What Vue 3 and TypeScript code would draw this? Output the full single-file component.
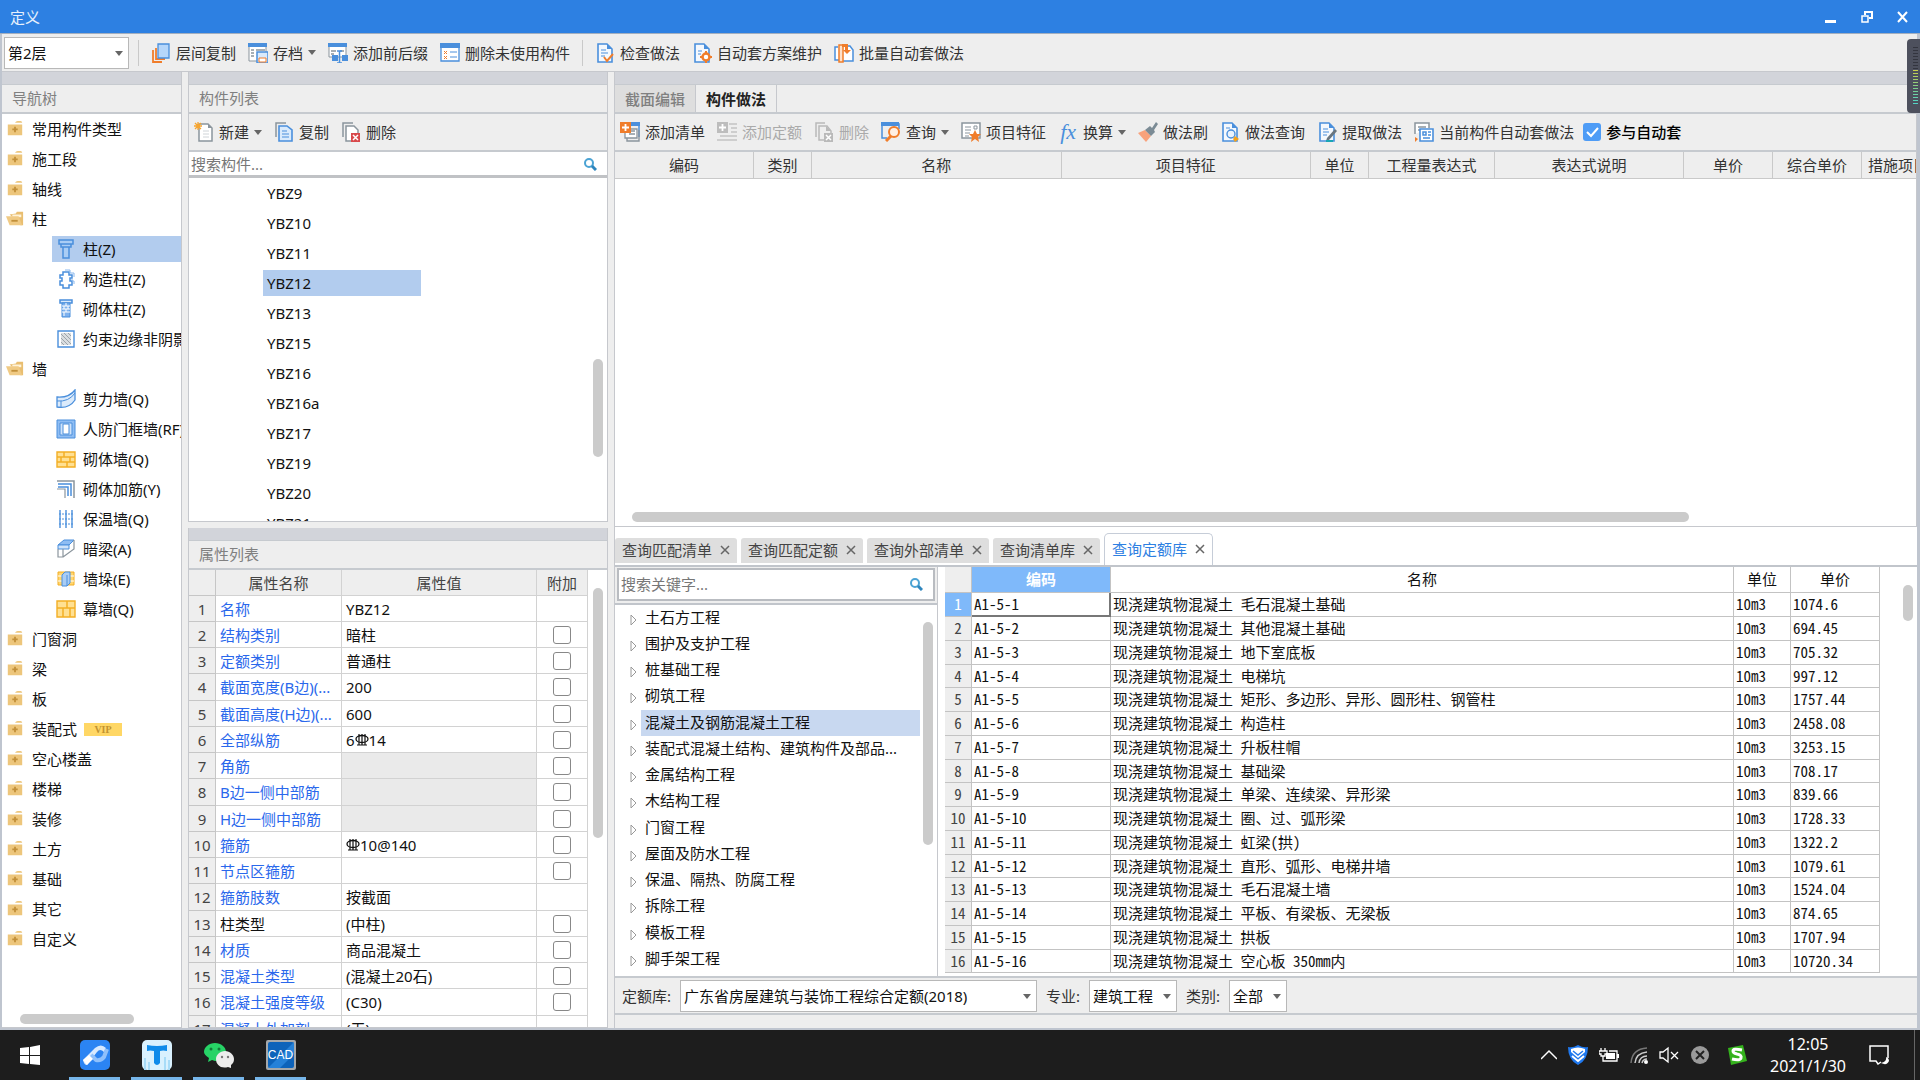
<script setup lang="ts">
import { ref } from 'vue'

interface TreeLeaf { label: string; icon: string }
interface TreeGroup { label: string; vip?: boolean; children?: TreeLeaf[] }
interface ToolItem { label: string; icon: string; menu?: boolean; disabled?: boolean; divider?: boolean }
interface PropRow { name: string; value?: string; rebar?: [string, string]; check?: boolean; plain?: boolean; locked?: boolean }

const B = '#4a8fdc'
const O = '#f07d2b'
const G = '#8b959d'
const folderBody = '<path d="M2 5h16v12H2zM10 3q1-2 3-2h3q2 0 2 2z" fill="#edc67c"/>'
const page = (c: string) => `<path d="M3 1h9l5 5v13H3z" fill="#f4f8fd" stroke="${c}" stroke-width="1.6"/><path d="M12 1v5h5z" fill="${c}"/>`

const icons: Record<string, string> = {
  closed: folderBody + '<path d="M10 7.500v6M7 10.500h6" stroke="#c2903a" stroke-width="2"/>',
  open: '<path d="M4 5l7-1 1-2h7v15h-3z" fill="#e9be70"/><path d="M7 5h10v3H7z" fill="#fff3d8"/><path d="M0 7h14l4 10H4z" fill="#f0ca84"/><path d="M6 12h7" stroke="#c2903a" stroke-width="2"/>',
  column: `<path d="M3 1h14v4H3zM5 5h10v3H5zM7 8h6v11H7z" fill="#a9cdf5" stroke="${B}" stroke-width="1.500"/>`,
  structCol: `<path d="M7 3h6v3h3v3h-2v3h2v4h-3v3H7v-3H4v-4h2V9H4V6h3z" fill="#fff" stroke="${B}" stroke-width="1.500"/><path d="M9 1h5v3h4v4M16 10v2h2v3" fill="none" stroke="#8ab8ee"/>`,
  brickCol: `<path d="M4 1h12v3H4z" fill="#d9eafc" stroke="${B}" stroke-width="1.500"/><path d="M6 4h8v14H6z" fill="#7fb2ee" stroke="${B}"/><path d="M6 7h8M6 10h8M6 13h8M10 4v3M8 7v3M12 7v3M10 10v3M8 13v4" stroke="#fff"/>`,
  edge: `<path d="M2 2h16v16H2z" fill="#fff" stroke="${B}" stroke-width="1.400"/><path d="M5 4h10v12H5z" fill="#d9dde0"/><path d="M5 5l10 10M5 9l7 7M8 4l7 7M5 13l3 3M12 4l3 3" stroke="#9ca4aa"/>`,
  shear: `<path d="M1 8q12 1 18-7v10q-6 9-18 7z" fill="#dcebfb" stroke="${B}" stroke-width="1.300"/><path d="M1 12q12 1 18-8M5 12v6" stroke="${B}" fill="none"/>`,
  frame: `<path d="M1 1h18v18H1z" fill="#8fbdf3" stroke="${B}"/><path d="M4 4h12v12H4z" fill="#cfe3fa" stroke="${B}"/><path d="M7 5h6v10H7z" fill="#fff" stroke="${B}"/>`,
  brick: '<path d="M1 3h18v15H1z" fill="#ffe092" stroke="#f3ae25" stroke-width="1.400"/><path d="M1 8h18M1 13h18M8 3v5M14 8v5M5 8v5M11 13v5" stroke="#f3ae25" stroke-width="1.500"/>',
  rebar: `<path d="M1 2h17v17" fill="none" stroke="${G}" stroke-width="1.500"/><path d="M2 5h13v12M2 8h10v9" fill="none" stroke="${B}" stroke-width="1.500"/><path d="M1 10h8v9" fill="none" stroke="${G}" stroke-width="1.200"/>`,
  insul: `<path d="M4 1v18M10 1v18M16 1v18" stroke="${B}" stroke-width="1.400"/><path d="M3 5h14M3 10h14M3 15h14" stroke="${B}" stroke-dasharray="2 1"/>`,
  beam: `<path d="M2 6l6-5h10l-5 5z" fill="#8fbdf3" stroke="${B}"/><path d="M2 6h11v4H2z" fill="#cfe3fa" stroke="${B}"/><path d="M2 10v8h5v-8M7 18l11-8V1" fill="none" stroke="${G}" stroke-width="1.200"/>`,
  pier: `<path d="M2 3h16v13H2z" fill="#ffd56f" stroke="#f3ae25"/><path d="M2 7h16M2 12h16" stroke="#fff"/><path d="M6 6l3-3h5v11l-3 3H6z" fill="#a9cdf5" stroke="${B}"/><path d="M11 6v11" stroke="${B}"/>`,
  curtain: '<path d="M1 2h18v16H1z" fill="#ffe092" stroke="#f3ae25" stroke-width="1.400"/><path d="M1 9h18M11 2v7M7 9v9M14 9v9" stroke="#f3ae25" stroke-width="1.500"/>',
  layers: `<path d="M2 7v12h9M5 5v11h9" fill="none" stroke="${O}" stroke-width="1.800"/><path d="M7 1h11v14H7z" fill="#b5d6fa" stroke="${B}" stroke-width="1.300"/>`,
  archive: `<path d="M1 1h17v17H1z" fill="#fff" stroke="${G}"/><path d="M0 0h19v4H0z" fill="${B}"/><path d="M3 7h3M3 10h3M3 13h3M8 7h9" stroke="${G}" stroke-width="1.500"/><path d="M9 9h11v11H9z" fill="#d9eafc" stroke="${B}" stroke-width="1.500"/><path d="M11 15h7v4h-7z" fill="#fff" stroke="${O}"/>`,
  affix: `<path d="M1 1h17v13H1z" fill="#fff" stroke="${G}"/><path d="M0 0h19v4H0z" fill="${B}"/><path d="M3 8h5M3 11h3M12 8h4" stroke="${G}" stroke-width="1.500"/><path d="M9 8h5M11.500 8v12M9 20h5" stroke="${B}" stroke-width="1.500"/><path d="M4 12h6v6H4zM14 12h6v6h-6z" fill="${B}"/>`,
  unused: `<path d="M1 1h18v17H1z" fill="#fff" stroke="${B}" stroke-width="1.300"/><path d="M0 0h20v5H0z" fill="${B}"/><path d="M4 8l3 3M7 8l-3 3M4 13l3 3M7 13l-3 3" stroke="${O}"/><path d="M10 9h7M10 14h7" stroke="${B}"/>`,
  check: page(B) + `<path d="M6 7h5M6 10h7M6 13h4" stroke="${B}"/><path d="M9 14l3 4 6-7" fill="none" stroke="${O}" stroke-width="2"/>`,
  gear: page(B) + `<path d="M6 8h4M6 11h3" stroke="${B}"/><circle cx="14" cy="14" r="3.500" fill="#fff" stroke="${O}" stroke-width="2.500"/><path d="M14 8v3M14 17v3M8 14h3M17 14h3" stroke="${O}" stroke-width="2"/>`,
  batch: `<path d="M4 4H1v13h4M10 3h6l3 4v11H8" fill="#fff" stroke="${B}" stroke-width="1.500"/><path d="M5 2h4v17H5z" fill="#ffe0c8" stroke="${O}" stroke-width="1.500"/><path d="M8 1h6v6h3l-4 4-4-4h2V4H8z" fill="${O}"/>`,
  fresh: `<path d="M5 2h9l4 4v13H5z" fill="#fff" stroke="${G}" stroke-width="1.500"/><path d="M14 2v4h4z" fill="${G}"/><path d="M9 9h6M9 12h6M9 15h6" stroke="#cfd4d8"/><path d="M4 0v8M0 4h8M1 1l6 6M7 1L1 7" stroke="#f6a530" stroke-width="1.300"/>`,
  copy: `<path d="M2 15V1h10" fill="none" stroke="${G}" stroke-width="1.500"/><path d="M5 4h8l5 4v11H5z" fill="#d9eafc" stroke="${B}" stroke-width="1.600"/><path d="M8 9h5M8 12h7M8 15h7" stroke="${B}"/>`,
  del: `<path d="M2 15V1h10" fill="none" stroke="${G}" stroke-width="1.500"/><path d="M5 4h8l4 4v11H5z" fill="#fff" stroke="${G}" stroke-width="1.500"/><path d="M10 11h9v9h-9z" fill="#d8494b"/><path d="M12 13l5 5M17 13l-5 5" stroke="#fff" stroke-width="1.500"/>`,
  delOff: '<path d="M2 15V1h9M5 18V4h8l4 5v9z" fill="none" stroke="#b9b9b9" stroke-width="1.500"/><path d="M12 4v5h5z" fill="#b9b9b9"/><path d="M10 11h9v9h-9z" fill="#b9b9b9"/><path d="M12 13l5 5M17 13l-5 5" stroke="#fff" stroke-width="1.500"/>',
  addList: `<path d="M10 1h9v14" fill="none" stroke="${B}" stroke-width="1.500"/><path d="M11 0h9v4h-9z" fill="${B}"/><path d="M5 7h12v9H5z" fill="#fff" stroke="${G}" stroke-width="1.300"/><path d="M7 16v3h12V8M9 9h6M9 12h6" fill="none" stroke="${G}" stroke-width="1.400"/><path d="M0 0h11v11H0z" fill="${O}"/><path d="M5.500 2v7M2 5.500h7" stroke="#fff" stroke-width="1.800"/>`,
  addOff: '<path d="M0 0h11v11H0z" fill="#bdbdbd"/><path d="M5.500 2v7M2 5.500h7" stroke="#fff" stroke-width="1.800"/><path d="M12 2h8M14 6h6M14 10h6M3 14h17M0 18h20M8 14h4" stroke="#c4c4c4" stroke-width="1.600"/>',
  query: `<path d="M1 2h17v5M1 2v14h5" fill="none" stroke="${B}" stroke-width="1.500"/><path d="M0 0h18v4H0z" fill="${B}"/><circle cx="13" cy="10" r="5" fill="#fff0e4" stroke="${O}" stroke-width="2"/><path d="M10 14l-5 5" stroke="${O}" stroke-width="3"/>`,
  feature: `<path d="M1 1h18v15H1z" fill="#fff" stroke="${G}" stroke-width="1.500"/><path d="M4 5h6M4 8h6M4 11h5M4 14h4M13 4h3v3h-3z" stroke="${G}" fill="none"/><path d="M14 8l2 4h4l-3 3 1 5-4-3-4 3 1-5-3-3h4z" fill="${O}"/>`,
  brush: `<path d="M0 11l7-3 6 6-5 6z" fill="#f8a27c"/><path d="M7 8l5-4 2 2 4-6 2 2-4 6 1 2-4 4z" fill="#7b8b95"/>`,
  pageFind: page(B) + `<path d="M6 6h4" stroke="${B}"/><circle cx="11" cy="12" r="4" fill="#eaf3fd" stroke="${B}" stroke-width="1.400"/><path d="M15 14l4 3-4 3-2-3z" fill="#f5a21b"/>`,
  extract: page(B) + `<path d="M6 7h5M6 10h6M6 13h4" stroke="${B}"/><path d="M18 7l2 2-8 9-3 1 1-3z" fill="#69757e"/><path d="M9 19h7" stroke="#19a5b5" stroke-width="2"/>`,
  autoSet: `<path d="M1 12V1h14v5" fill="#fff" stroke="${G}" stroke-width="1.500"/><path d="M4 5h8M4 8h3" stroke="${G}" stroke-width="1.500"/><path d="M6 7h13v12H6z" fill="#fff" stroke="${B}" stroke-width="1.600"/><path d="M9 10h3v3H9zM9 16h7M14 10h3M14 13h3" stroke="${B}" stroke-width="1.500" fill="none"/><path d="M1 15l3 2-3 3z" fill="${O}"/>`,
}

const tree: TreeGroup[] = [
  { label: '常用构件类型' }, { label: '施工段' }, { label: '轴线' },
  { label: '柱', children: [
    { label: '柱(Z)', icon: 'column' }, { label: '构造柱(Z)', icon: 'structCol' },
    { label: '砌体柱(Z)', icon: 'brickCol' }, { label: '约束边缘非阴影', icon: 'edge' },
  ] },
  { label: '墙', children: [
    { label: '剪力墙(Q)', icon: 'shear' }, { label: '人防门框墙(RF)', icon: 'frame' },
    { label: '砌体墙(Q)', icon: 'brick' }, { label: '砌体加筋(Y)', icon: 'rebar' },
    { label: '保温墙(Q)', icon: 'insul' }, { label: '暗梁(A)', icon: 'beam' },
    { label: '墙垛(E)', icon: 'pier' }, { label: '幕墙(Q)', icon: 'curtain' },
  ] },
  { label: '门窗洞' }, { label: '梁' }, { label: '板' }, { label: '装配式', vip: true },
  { label: '空心楼盖' }, { label: '楼梯' }, { label: '装修' }, { label: '土方' },
  { label: '基础' }, { label: '其它' }, { label: '自定义' },
]

const mainTools: ToolItem[] = [
  { label: '层间复制', icon: 'layers' }, { label: '存档', icon: 'archive', menu: true },
  { label: '添加前后缀', icon: 'affix' }, { label: '删除未使用构件', icon: 'unused' },
  { label: '检查做法', icon: 'check', divider: true }, { label: '自动套方案维护', icon: 'gear' },
  { label: '批量自动套做法', icon: 'batch' },
]
const listTools: ToolItem[] = [
  { label: '新建', icon: 'fresh', menu: true }, { label: '复制', icon: 'copy' }, { label: '删除', icon: 'del' },
]
const methodTools: ToolItem[] = [
  { label: '添加清单', icon: 'addList' }, { label: '添加定额', icon: 'addOff', disabled: true },
  { label: '删除', icon: 'delOff', disabled: true }, { label: '查询', icon: 'query', menu: true },
  { label: '项目特征', icon: 'feature' }, { label: '换算', icon: 'fx', menu: true },
  { label: '做法刷', icon: 'brush' }, { label: '做法查询', icon: 'pageFind' },
  { label: '提取做法', icon: 'extract' }, { label: '当前构件自动套做法', icon: 'autoSet' },
]

const components = ['YBZ9', 'YBZ10', 'YBZ11', 'YBZ12', 'YBZ13', 'YBZ15', 'YBZ16', 'YBZ16a', 'YBZ17', 'YBZ19', 'YBZ20', 'YBZ21']

const props: PropRow[] = [
  { name: '名称', value: 'YBZ12' },
  { name: '结构类别', value: '暗柱', check: true },
  { name: '定额类别', value: '普通柱', check: true },
  { name: '截面宽度(B边)(...', value: '200', check: true },
  { name: '截面高度(H边)(...', value: '600', check: true },
  { name: '全部纵筋', rebar: ['6', '14'], check: true },
  { name: '角筋', check: true, locked: true },
  { name: 'B边一侧中部筋', check: true, locked: true },
  { name: 'H边一侧中部筋', check: true, locked: true },
  { name: '箍筋', rebar: ['', '10@140'], check: true },
  { name: '节点区箍筋', check: true },
  { name: '箍筋肢数', value: '按截面' },
  { name: '柱类型', value: '(中柱)', check: true, plain: true },
  { name: '材质', value: '商品混凝土', check: true },
  { name: '混凝土类型', value: '(混凝土20石)', check: true },
  { name: '混凝土强度等级', value: '(C30)', check: true },
  { name: '混凝土外加剂', value: '(无)' },
]

const methodColumns = [
  ['编码', 'w-code'], ['类别', 'w-kind'], ['名称', ''], ['项目特征', ''], ['单位', 'w-kind'], ['工程量表达式', 'w-expr'],
  ['表达式说明', 'w-note'], ['单价', 'w-price'], ['综合单价', 'w-price'], ['措施项目', 'w-last'],
]
const queryTabs = ['查询匹配清单', '查询匹配定额', '查询外部清单', '查询清单库', '查询定额库']
const chapters = ['土石方工程', '围护及支护工程', '桩基础工程', '砌筑工程', '混凝土及钢筋混凝土工程', '装配式混凝土结构、建筑构件及部品...', '金属结构工程', '木结构工程', '门窗工程', '屋面及防水工程', '保温、隔热、防腐工程', '拆除工程', '模板工程', '脚手架工程']
const quotas: [string, string][] = [
  ['毛石混凝土基础', '1074.6'], ['其他混凝土基础', '694.45'], ['地下室底板', '705.32'], ['电梯坑', '997.12'],
  ['矩形、多边形、异形、圆形柱、钢管柱', '1757.44'], ['构造柱', '2458.08'], ['升板柱帽', '3253.15'], ['基础梁', '708.17'],
  ['单梁、连续梁、异形梁', '839.66'], ['圈、过、弧形梁', '1728.33'], ['虹梁(拱)', '1322.2'], ['直形、弧形、电梯井墙', '1079.61'],
  ['毛石混凝土墙', '1524.04'], ['平板、有梁板、无梁板', '874.65'], ['拱板', '1707.94'], ['空心板 350mm内', '10720.34'],
]

const activeLeaf = ref('柱(Z)')
const activeComponent = ref('YBZ12')
const activeTab = ref('查询定额库')
const activeChapter = ref('混凝土及钢筋混凝土工程')
const autoJoin = ref(true)
</script>

<template>
  <div class="window">
    <header class="titlebar">
      <span>定义</span>
      <div class="win-btns">
        <button aria-label="最小化"><svg width="12" height="12"><path d="M0 9h11v3H0z" fill="#fff" /></svg></button>
        <button aria-label="还原"><svg width="12" height="12"><path d="M4 4V1h7v6H8M4 1h7" fill="none" stroke="#fff" stroke-width="2" /><path d="M1 5h6v6H1z" fill="none" stroke="#fff" stroke-width="1.500" /></svg></button>
        <button aria-label="关闭"><svg width="12" height="12"><path d="M1 1l9 10M10 1L1 11" stroke="#fff" stroke-width="2" /></svg></button>
      </div>
    </header>

    <div class="frame">
      <div class="toolbar main-bar">
        <span class="select floor"><select aria-label="楼层"><option>第2层</option></select></span>
        <i class="divider first"></i>
        <template v-for="t in mainTools" :key="t.label">
          <i v-if="t.divider" class="divider"></i>
          <button class="tool">
            <svg class="icon" viewBox="0 0 20 20" v-html="icons[t.icon]"></svg>{{ t.label }}<i v-if="t.menu" class="caret"></i>
          </button>
        </template>
      </div>

      <main class="workspace">
        <nav class="panel nav">
          <div class="band"></div>
          <h2 class="head">导航树</h2>
          <div class="tree">
            <template v-for="g in tree" :key="g.label">
              <button class="group">
                <svg class="folder" viewBox="0 0 20 20" v-html="g.children ? icons.open : icons.closed"></svg>{{ g.label }}
                <span v-if="g.vip" class="vip">VIP</span>
              </button>
              <button v-for="c in g.children" :key="c.label" class="leaf" @click="activeLeaf = c.label">
                <span class="leaf-body" :class="{ on: activeLeaf === c.label }">
                  <svg class="icon" viewBox="0 0 20 20" v-html="icons[c.icon]"></svg>{{ c.label }}
                </span>
              </button>
            </template>
            <i class="thumb nav-thumb"></i>
          </div>
        </nav>

        <div class="middle">
          <section class="panel">
            <div class="band"></div>
            <h2 class="head">构件列表</h2>
            <div class="toolbar sub-bar">
              <button v-for="t in listTools" :key="t.label" class="tool">
                <svg class="icon" viewBox="0 0 20 20" v-html="icons[t.icon]"></svg>{{ t.label }}<i v-if="t.menu" class="caret"></i>
              </button>
            </div>
            <label class="search">
              <input type="text" placeholder="搜索构件..." aria-label="搜索构件">
              <svg width="14" height="14"><circle cx="6" cy="6" r="4" fill="none" stroke="#4ba3d4" stroke-width="2" /><path d="M9 9l4 4" stroke="#2f86bd" stroke-width="3" /></svg>
            </label>
            <div class="comp-list">
              <button v-for="c in components" :key="c" class="comp" @click="activeComponent = c">
                <span :class="{ on: activeComponent === c }">{{ c }}</span>
              </button>
              <i class="thumb comp-thumb"></i>
            </div>
          </section>

          <section class="panel">
            <div class="band"></div>
            <h2 class="head">属性列表</h2>
            <div class="props">
              <table>
                <thead><tr><th class="no"></th><th class="pname">属性名称</th><th>属性值</th><th class="extra">附加</th></tr></thead>
                <tbody>
                  <tr v-for="(p, i) in props" :key="p.name">
                    <td class="no">{{ i + 1 }}</td>
                    <td class="key" :class="{ plain: p.plain }">{{ p.name }}</td>
                    <td :class="{ locked: p.locked }">
                      <template v-if="p.rebar">{{ p.rebar[0] }}<svg class="bar-sign" viewBox="0 0 14 14"><path d="M7 1v11M4 1v11M10 1v11M2 12h10" stroke="#111" stroke-width="1.200" /><ellipse cx="7" cy="6" rx="6" ry="3.500" fill="none" stroke="#111" stroke-width="1.300" /></svg>{{ p.rebar[1] }}</template>
                      <template v-else>{{ p.value }}</template>
                    </td>
                    <td class="extra"><input v-if="p.check" type="checkbox" :aria-label="p.name + ' 附加'"></td>
                  </tr>
                </tbody>
              </table>
              <i class="thumb prop-thumb"></i>
            </div>
          </section>
        </div>

        <div class="right">
          <section class="panel method">
            <div class="band"></div>
            <div class="head tabs"><button class="tab">截面编辑</button><button class="tab on">构件做法</button></div>
            <div class="toolbar sub-bar">
              <button v-for="t in methodTools" :key="t.label" class="tool" :disabled="t.disabled">
                <span v-if="t.icon === 'fx'" class="fx">fx</span>
                <svg v-else class="icon" viewBox="0 0 20 20" v-html="icons[t.icon]"></svg>{{ t.label }}<i v-if="t.menu" class="caret"></i>
              </button>
              <label class="join"><input v-model="autoJoin" type="checkbox">参与自动套</label>
            </div>
            <div class="method-body">
              <table>
                <thead><tr><th v-for="c in methodColumns" :key="c[0]" :class="c[1]">{{ c[0] }}</th></tr></thead>
              </table>
              <i class="thumb method-thumb"></i>
            </div>
          </section>

          <section class="query">
            <div class="qtabs">
              <div v-for="t in queryTabs" :key="t" class="qtab" :class="{ on: activeTab === t }">
                <button @click="activeTab = t">{{ t }}</button>
                <button :aria-label="'关闭' + t"><svg width="10" height="10"><path d="M1 1l8 8M9 1L1 9" stroke="#666" stroke-width="1.500" /></svg></button>
              </div>
            </div>
            <div class="qbody">
              <div class="chapters">
                <div class="qsearch">
                  <label class="search boxed">
                    <input type="text" placeholder="搜索关键字..." aria-label="搜索关键字">
                    <svg width="14" height="14"><circle cx="6" cy="6" r="4" fill="none" stroke="#4ba3d4" stroke-width="2" /><path d="M9 9l4 4" stroke="#2f86bd" stroke-width="3" /></svg>
                  </label>
                </div>
                <div class="chapter-list">
                  <button v-for="c in chapters" :key="c" class="chapter" @click="activeChapter = c">
                    <svg width="8" height="12"><path d="M1 1v10l5-5z" fill="#fff" stroke="#999" /></svg>
                    <span :class="{ on: activeChapter === c }">{{ c }}</span>
                  </button>
                  <i class="thumb chapter-thumb"></i>
                </div>
              </div>
              <div class="quota">
                <table>
                  <thead><tr><th class="no"></th><th class="q-code">编码</th><th>名称</th><th class="q-unit">单位</th><th class="q-price">单价</th></tr></thead>
                  <tbody>
                    <tr v-for="(q, i) in quotas" :key="i">
                      <td class="no">{{ i + 1 }}</td>
                      <td>A1-5-{{ i + 1 }}</td><td>现浇建筑物混凝土 {{ q[0] }}</td><td>10m3</td><td>{{ q[1] }}</td>
                    </tr>
                  </tbody>
                </table>
                <i class="thumb quota-thumb"></i>
              </div>
            </div>
            <div class="filters">
              <label for="lib">定额库:</label>
              <span class="select lib"><select id="lib"><option>广东省房屋建筑与装饰工程综合定额(2018)</option></select></span>
              <label for="major">专业:</label>
              <span class="select major"><select id="major"><option>建筑工程</option></select></span>
              <label for="kind">类别:</label>
              <span class="select kind"><select id="kind"><option>全部</option></select></span>
            </div>
          </section>
        </div>
      </main>
    </div>

    <div class="meter"><i class="idle"></i><i class="level"></i></div>

    <footer class="taskbar">
      <button class="start" aria-label="开始"><svg width="20" height="20"><path d="M0 3l9-1v8H0zM10 2l10-2v10H10zM0 11h9v8l-9-1zM10 11h10v9l-10-1z" fill="#fff" /></svg></button>
      <button class="app" aria-label="造价工具">
        <svg viewBox="0 0 30 30"><rect width="30" height="30" rx="5" fill="#2b84f3" /><path d="M3 20L15 8q6-5 11 0l-2 4q-4-4-7 0L7 25q-3 0-4-5z" fill="#d7e9ff" /><path d="M11 15l5 5q5 1 8-3l3-8" fill="none" stroke="#8fc0fb" stroke-width="4" /><path d="M3 20l6-5 4 4-6 6z" fill="#fff" /></svg>
      </button>
      <button class="app" aria-label="土建计量">
        <svg viewBox="0 0 30 30"><rect width="30" height="30" rx="5" fill="#d9f1fe" /><path d="M3 30V18M7 30V22M23 30V17M27 30V20" stroke="#a8dcf8" stroke-width="2" /><path d="M5 5q10 2 20 0v6q-4-1-7 0v12q-3 4-6 0V11q-4-1-7 0z" fill="#0f8bea" /></svg>
      </button>
      <button class="app" aria-label="微信">
        <svg viewBox="0 0 30 30"><path d="M11 3c6 0 11 4 11 9s-5 9-11 9l-3-1-4 2 1-4c-3-2-5-4-5-6 0-5 5-9 11-9z" fill="#27d366" /><circle cx="7" cy="9" r="1.500" fill="#137a3a" /><circle cx="15" cy="9" r="1.500" fill="#137a3a" /><path d="M21 11c5 0 9 4 9 8 0 3-1 4-3 6v3l-3-1c-7 2-12-2-12-8 0-4 4-8 9-8z" fill="#ececec" /><circle cx="18" cy="17" r="1.200" fill="#777" /><circle cx="24" cy="17" r="1.200" fill="#777" /></svg>
      </button>
      <button class="app" aria-label="看图">
        <svg viewBox="0 0 30 30"><rect width="30" height="30" rx="2" fill="#a5a8aa" /><rect x="2" y="2" width="26" height="26" rx="2" fill="#0d63ba" /><path d="M2 28L28 2v12L14 28z" fill="#2581d8" /><text x="15" y="21" font-size="13" textLength="0" fill="none" /></svg>
        <span class="cad">CAD</span>
      </button>

      <div class="tray">
        <svg width="16" height="20"><path d="M0 14l8-8 8 8" fill="none" stroke="#fff" stroke-width="1.500" /></svg>
        <svg width="20" height="20"><path d="M10 0q5 3 10 2 0 13-10 18Q0 15 0 2q5 1 10-2z" fill="#1f78ee" /><path d="M3 4q7-3 14 0v3l-7 6-7-6z" fill="#fff" /><path d="M5 6l5 4 5-4M4 11l6 5 6-5" fill="none" stroke="#1f78ee" stroke-width="1.500" /><path d="M4 11l6 5 6-5" fill="none" stroke="#fff" stroke-width="2" /></svg>
        <svg width="20" height="20"><path d="M2 3v3M6 3v3M0 6h8v3H6v2H2V9H0zM4 11v5h14V6h-8" fill="none" stroke="#fff" stroke-width="1.300" /><path d="M7 8h9v6H7z" fill="#fff" /><path d="M19 9v4" stroke="#fff" stroke-width="2" /></svg>
        <svg width="18" height="20"><path d="M1 18Q2 4 17 3" fill="none" stroke="#777" stroke-width="1.500" /><path d="M5 18Q6 8 17 7M9 18q1-7 8-7M12 18q1-4 5-4" fill="none" stroke="#ccc" stroke-width="1.500" /><circle cx="16" cy="17" r="2" fill="#fff" /></svg>
        <svg width="20" height="20"><path d="M1 7h3l5-4v14l-5-4H1zM12 7l7 7M19 7l-7 7" fill="none" stroke="#fff" stroke-width="1.300" /></svg>
        <svg width="20" height="20"><circle cx="10" cy="10" r="9" fill="#9a9a9a" /><path d="M6 6l8 8M14 6l-8 8" stroke="#222" stroke-width="2" /></svg>
        <svg class="sogou" width="20" height="20"><path d="M1 3L16 0l4 16-16 4z" fill="#35b31d" /><path d="M15 5q-9-2-9 1 0 2 4 3 5 1 4 4-1 3-9 1" fill="none" stroke="#fff" stroke-width="3" /></svg>
        <div class="clock"><span>12:05</span><span>2021/1/30</span></div>
        <svg width="20" height="20"><path d="M12 17l-3 2-2-3H1V1h18v12" fill="none" stroke="#fff" stroke-width="1.500" /><path d="M17 12q1 5-5 6 6 3 8-2 0-3-3-4z" fill="#fff" /></svg>
      </div>
    </footer>
  </div>
</template>

<style>
body { margin: 0; overflow: hidden; }
</style>

<style scoped>
.window {
  position: relative; display: flex; flex-direction: column; height: 100vh;
  background: #eee; color: #111; font: 15px/20px "Noto Sans", "Noto Sans CJK SC", sans-serif;
}
* { box-sizing: border-box; }
button { font: inherit; color: inherit; background: none; border: 0; padding: 0; text-align: left; white-space: nowrap; }
input, select { font: inherit; color: inherit; margin: 0; }
table { border-collapse: separate; border-spacing: 0; table-layout: fixed; width: 100%; }
th { font-weight: 400; padding: 0; white-space: nowrap; overflow: hidden; }
td { padding: 0 4px; white-space: nowrap; overflow: hidden; }
svg { flex: none; }

.titlebar {
  display: flex; justify-content: space-between; align-items: center; height: 34px; flex: none;
  padding: 0 11px 0 10px; background: #2d80e2; border-bottom: 1px solid #a3afbf; color: #e6f0fc;
}
.win-btns { display: flex; gap: 24px; }
.win-btns button { display: flex; }

.frame {
  flex: 1; min-height: 0; display: flex; flex-direction: column;
  border: solid #bfc5cf; border-width: 0 3px 2px 2px;
}
.toolbar { display: flex; align-items: center; gap: 12px; flex: none; color: #333; }
.main-bar { height: 38px; padding-left: 2px; border-bottom: 1px solid #c6c8cd; }
.sub-bar { height: 38px; padding-left: 5px; border-bottom: 2px solid #c6cacf; }
.tool { display: flex; align-items: center; gap: 5px; }
.tool:disabled { color: #aaa; }
.icon { width: 20px; height: 20px; }
.caret { border: solid transparent; border-width: 5px 4px 0; border-top-color: #666; }
.divider { width: 1px; height: 26px; background: #c9c9c9; }
.divider.first { margin: 0 0 0 -3px; }

.select { position: relative; display: flex; }
.select::after {
  content: ""; position: absolute; right: 6px; top: 50%; margin-top: -2px;
  border: solid transparent; border-width: 5px 4px 0; border-top-color: #666; pointer-events: none;
}
.select select { appearance: none; width: 100%; height: 32px; padding: 0 3px; background: #fff; border: 1px solid #b8b8b8; border-radius: 0; color: #111; }
.floor { width: 125px; }

.workspace { flex: 1; min-height: 0; display: flex; gap: 6px; }
.panel { display: flex; flex-direction: column; min-height: 0; min-width: 0; border: 1px solid #c6c8cd; border-top: 0; }
.band { height: 13px; flex: none; background: #d2d4da; border-bottom: 1px solid #c6cacf; }
.head { height: 29px; flex: none; margin: 0; padding-left: 10px; font-size: 15px; line-height: 26px; font-weight: 400; color: #808080; border-bottom: 2px solid #c6cacf; }

.nav { width: 180px; flex: none; border-left: 0; }
.tree { position: relative; flex: 1; min-height: 0; overflow: hidden; background: #fff; }
.group { display: flex; align-items: center; gap: 7px; width: 100%; height: 30px; padding-left: 3px; }
.folder { width: 20px; height: 18px; }
.vip { width: 38px; height: 13px; background: #ffd765; color: #c29331; font: bold 10px/13px "Liberation Serif", serif; text-align: center; }
.leaf { display: flex; align-items: center; width: 100%; height: 30px; padding-left: 50px; }
.leaf-body { display: flex; align-items: center; gap: 7px; flex: none; min-width: 100%; height: 26px; padding-left: 4px; }
.on.leaf-body { background: #b2ccee; }

.thumb { position: absolute; background: #cbcbcb; border-radius: 5px; }
.nav-thumb { left: 18px; bottom: 3px; width: 114px; height: 10px; }
.comp-thumb { right: 4px; bottom: 64px; width: 10px; height: 98px; }
.prop-thumb { right: 4px; top: 18px; width: 10px; height: 250px; }
.method-thumb { left: 17px; right: 227px; bottom: 4px; height: 10px; }
.chapter-thumb { right: 4px; top: 17px; width: 10px; height: 223px; }
.quota-thumb { right: 4px; top: 18px; width: 10px; height: 36px; }

.middle { width: 420px; flex: none; display: grid; gap: 6px; grid-template-rows: minmax(0, 450fr) minmax(0, 500fr); }
.search { display: flex; align-items: center; height: 26px; flex: none; padding: 0 10px 0 2px; background: #fff; border-bottom: 3px solid #c0c2c5; }
.search input { flex: 1; min-width: 0; border: 0; padding: 0; outline: 0; background: none; }
.search input::placeholder { color: #777; opacity: 1; }
.comp-list { position: relative; flex: 1; min-height: 0; overflow: hidden; background: #fff; }
.comp { display: flex; align-items: center; width: 100%; height: 30px; padding-left: 74px; }
.comp span { width: 158px; height: 26px; line-height: 26px; padding-left: 4px; }
.comp .on { background: #b2ccee; }

.props { position: relative; flex: 1; min-height: 0; overflow: hidden; background: #fff; padding-right: 19px; }
.props tr, .chapter { height: 26px; }
.props tbody tr:nth-child(4n), .chapter:nth-child(4n) { height: 27px; }
.props th, .props td { border: solid #d2d2d2; border-width: 0 1px 1px 0; }
.props th { background: #eee; color: #444; }
.props .no { width: 27px; background: #eee; color: #444; text-align: center; padding: 0; border-color: #c6c6c6; }
.pname { width: 126px; }
.props .extra { width: 51px; text-align: center; padding: 0; line-height: 0; }
.props th.extra { line-height: 20px; }
.props .key { color: #2a68ec; }
.props .plain { color: #111; }
.props .locked { background: #eaeaea; }
.bar-sign { width: 14px; height: 14px; vertical-align: -1px; }
.props input { appearance: none; width: 18px; height: 18px; background: #fff; border: 1px solid #888; border-radius: 3px; }

.right { flex: 1; min-width: 0; display: grid; grid-template-rows: minmax(0, 455fr) minmax(0, 502fr); }
.tabs { display: flex; padding: 0; }
.tab { width: 81px; text-align: center; font-weight: 500; color: #808080; background: #dedede; border-right: 1px solid #c6c8cd; }
.tab.on { color: #222; background: #eee; font-weight: 700; }
.fx { font: italic 22px/20px "Liberation Serif", serif; color: #4a8fdc; width: 20px; text-align: center; }
.join { display: flex; align-items: center; gap: 5px; color: #000; font-weight: 500; margin-left: -3px; }
.join input { appearance: none; width: 18px; height: 18px; border: 1px solid #999; border-radius: 3px; background: #fff; }
.join input:checked {
  border: 0;
  background: #4e9cf6 url('data:image/svg+xml,<svg xmlns="http://www.w3.org/2000/svg" viewBox="0 0 18 18"><path d="M4 9l4 4 7-8" fill="none" stroke="white" stroke-width="2"/></svg>');
}
.method-body { position: relative; flex: 1; min-height: 0; background: #fff; }
.method-body th { height: 27px; background: #eee; color: #333; border: solid #c9c9c9; border-width: 0 1px 1px 0; }
.w-code { width: 139px; }
.w-kind { width: 58px; }
.w-expr { width: 126px; }
.w-note { width: 189px; }
.w-price { width: 89px; }
.method-body .w-last { width: 54px; padding-left: 6px; text-align: left; border-right: 0; }

.query { display: flex; flex-direction: column; min-height: 0; background: #fff; border-left: 1px solid #c6c8cd; }
.qtabs { display: flex; align-items: flex-end; gap: 4px; height: 40px; flex: none; border-bottom: 2px solid #c1c5cb; }
.qtab { display: flex; align-items: center; gap: 8px; height: 25px; margin-bottom: 2px; padding: 0 7px; background: #dedede; border-radius: 3px 3px 0 0; color: #444; }
.qtab button { display: flex; }
.qtab.on { height: 32px; margin-bottom: 0; background: #fff; border: 1px solid #c6cdd8; border-bottom: 0; border-radius: 5px 5px 0 0; color: #2d80e2; }
.qbody { flex: 1; min-height: 0; display: flex; gap: 7px; }
.chapters { display: flex; flex-direction: column; width: 323px; flex: none; border-right: 1px solid #c6c8cd; }
.qsearch { padding: 1px 2px 2px; border-bottom: 2px solid #c1c5cb; background: #eee; }
.boxed { height: 33px; border: 2px solid #b9bcc1; }
.chapter-list { position: relative; flex: 1; min-height: 0; overflow: hidden; }
.chapter { display: flex; align-items: center; gap: 3px; width: 100%; padding-left: 15px; }
.chapter svg { margin-top: 4px; }
.chapter span { width: 279px; height: 26px; line-height: 24px; padding-left: 4px; }
.chapter .on { background: #c8d8f0; }
.quota { position: relative; flex: 1; min-width: 0; overflow: hidden; padding-right: 37px; font-family: "Noto Sans Mono CJK SC", "Liberation Mono", "Noto Sans CJK SC", monospace; }
.quota thead tr { height: 26px; }
.quota tbody tr { height: 24px; }
.quota tbody tr:nth-child(4n) { height: 23px; }
.quota th, .quota td { border: solid #c3c3c3; border-width: 0 1px 1px 0; padding-top: 0; padding-bottom: 0; }
.quota td { padding: 0 2px; }
.quota .no { width: 27px; background: #eee; color: #444; text-align: center; }
.q-code { width: 139px; }
.quota th.q-code { background: #7fb9fa; color: #fff; font-weight: 700; }
.q-unit { width: 57px; }
.q-price { width: 89px; }
.quota tbody tr:first-child .no { background: #7fb9fa; color: #fff; }
.quota tbody tr:first-child td:nth-child(2) { box-shadow: inset -1px -1px #777; border-color: #777; }
.filters { display: flex; align-items: center; gap: 9px; height: 39px; flex: none; margin-bottom: 13px; padding-left: 7px; background: #eee; border: solid #c6cacf; border-width: 2px 0; box-shadow: 0 13px #eee; color: #333; }
.lib { width: 357px; }
.major { width: 88px; }
.kind { width: 58px; }

.meter { position: absolute; right: 0; top: 39px; width: 13px; height: 74px; padding: 8px 2px 8px 6px; background: #4d505d; border-radius: 4px 0 0 4px; display: flex; flex-direction: column; }
.meter i { flex: 2; background: repeating-linear-gradient(#33353f 0 1px, transparent 1px 3px); }
.meter .level { flex: 3; background: repeating-linear-gradient(transparent 0 1px, #4d505d 1px 3px), linear-gradient(#cdd04a, #7fd08a 50%, #4fd3cb); }

.taskbar { display: flex; align-items: center; height: 50px; flex: none; background: #1d1d1d; color: #fff; }
.start { display: flex; margin: 0 29px 0 20px; }
.app { position: relative; display: flex; align-items: center; justify-content: center; width: 51px; height: 50px; margin-right: 11px; border-bottom: 3px solid #76b6ea; padding-top: 3px; }
.app svg { width: 30px; height: 30px; }
.cad { position: absolute; font: 12px/16px "Liberation Sans", sans-serif; color: #fff; }
.tray { display: flex; align-items: center; gap: 11px; height: 100%; margin-left: auto; margin-right: 5px; padding-right: 25px; border-right: 1px solid #666; }
.sogou { margin-left: 6px; }
.clock { display: flex; flex-direction: column; align-items: center; width: 100px; font-size: 16px; line-height: 22px; }
</style>
